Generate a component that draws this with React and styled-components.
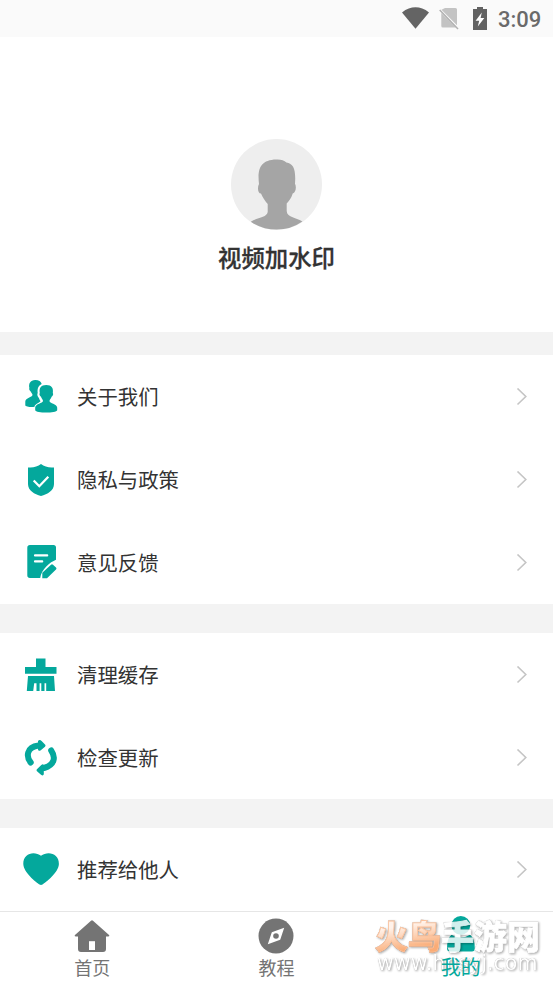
import React from "react";
import styled, { createGlobalStyle } from "styled-components";

const TEAL = "#04a89c";

const GlobalStyle = createGlobalStyle`
  * {
    box-sizing: border-box;
  }

  body {
    margin: 0;
    background: #fff;
    color: #333;
    font-family: Roboto, "Noto Sans CJK SC", sans-serif;
    overflow: hidden;
  }
`;

const icons = {
  about: (
    <g transform="translate(0 5)">
      <path d="M35.5 20C30.5 19.8 28.3 23.6 29.4 28C28.8 28.8 29.5 30.5 30.5 31.3C31.2 32.8 32.5 33.8 32.5 35C32.3 37.2 25.5 38 25.3 41.5V45.3C25.5 47 32 47.4 34.5 46.8C34.8 43.7 39.5 42.8 40.5 41.2C39.6 40 39.3 38.7 38.7 37.7C37.3 36.2 37 34.3 37.7 33C37.2 28.5 38.2 26 41.7 24C41 21.3 38.8 20 35.5 20Z" />
      <path d="M46.3 25C40.8 25 38.9 28.2 39.8 33C38.9 34 39.8 36 41 36.7C41.5 38.5 43 39.8 43 41C42.8 43.5 35.5 43.5 35.2 47.5V50.2C36 53.3 56.3 53.3 57.2 50.2V47.5C56.8 43.5 49.7 43.7 49.5 41C49.5 39.8 51.1 38.5 51.6 36.7C52.8 36 53.7 34 52.8 33C53.7 28.2 51.6 25 46.3 25Z" />
    </g>
  ),
  privacy: (
    <g transform="translate(0 2)">
      <path d="M41 24C37.6 26.7 33 28 28 27.4V44C28 50.5 34.5 54.3 41 56C47.5 54.3 54 50.5 54 44V27.4C49 28 44.4 26.7 41 24Z" />
      <path
        d="M33.7 40.5L39.3 46.2L48.3 36.7"
        fill="none"
        stroke="#fff"
        strokeWidth="2.3"
      />
    </g>
  ),
  feedback: (
    <g transform="translate(0 -6)">
      <path d="M30 30H53.5Q56 30 56 32.5V44.7C50 47.2 41.5 53.8 40.2 63H30Q27.3 63 27.3 60.3V32.7Q27.3 30 30 30Z" />
      <path
        d="M35 40.4H47.2M35 46.4H42.2"
        fill="none"
        stroke="#fff"
        strokeWidth="2.2"
        strokeLinecap="round"
      />
      <path d="M42.3 63.3V57.8L51 49.7Q52 48.8 53 49.7L56 52.5Q57 53.4 56 54.5L47 63.3Z" />
    </g>
  ),
  clean: (
    <>
      <path d="M36 25.5H45.5V34H56.5V40.7H25V34H36Z" />
      <path d="M28 43H54L55 58H46.2V50.3H44.5V58H41.3V50.3H39.6V58H36.5V50.3H34.2L33.2 58H26.8Z" />
    </>
  ),
  update: (
    <>
      <path
        d="M30.7 46.5C26.2 41 26 31 38.5 29.4M51.2 34.5C56 41.5 54.6 49 44 52"
        fill="none"
        stroke={TEAL}
        strokeWidth="6"
        strokeLinecap="round"
      />
      <path d="M38 25Q39.7 23 41.6 25L45 28.4Q46 29.6 45 30.7L40.8 34.2Q38.4 35.5 38 33.5ZM43.8 49V58.3Q43.2 60.3 41 58.8L37 55.2Q36 54 37.2 52.9L41.3 49Q43 47.5 43.8 49Z" />
    </>
  ),
  share: (
    <path d="M41 27.8C34.5 22.5 23 25 23.3 36C23.5 44.5 36 54 39.5 56.6Q41 57.5 42.5 56.6C46 54 58.7 44.5 58.9 36C59.2 25 47.5 22.5 41 27.8Z" />
  ),
};

const groups = [
  [
    { icon: "about", label: "关于我们" },
    { icon: "privacy", label: "隐私与政策" },
    { icon: "feedback", label: "意见反馈" },
  ],
  [
    { icon: "clean", label: "清理缓存" },
    { icon: "update", label: "检查更新" },
  ],
  [{ icon: "share", label: "推荐给他人" }],
];

const StatusIcons = () => (
  <StatusSvg viewBox="400 0 92 37">
    <path d="M402 12.4Q415.5 2.3 429 12.4L415.5 28.8Z" fill="#646464" />
    <path
      d="M445 8H455.5Q457 8 457 9.5V25.2L441.5 9.8ZM441.3 13L456 27.5H442.8Q441.3 27.5 441.3 26Z"
      fill="#c3c3c3"
    />
    <path d="M439.7 10L458 29" stroke="#b1b1b1" strokeWidth="1.5" />
    <path d="M477 7H483V9H487V30H473V9H477Z" fill="#626262" />
    <path d="M481.8 12.5L475.6 20.7H479.2L477.8 26.5L484.3 18H480.6Z" fill="#fff" />
  </StatusSvg>
);

const Avatar = () => (
  <AvatarSvg viewBox="0 0 91 91">
    <circle cx="45.5" cy="45.5" r="45.5" fill="#eee" />
    <path
      d="M45.5 20.5C50 20.3 53.2 21.6 55.4 23.4C62.7 24.5 65 30.5 64 44.7C65.7 48 64.8 53.5 61.7 54.6C60.5 59 57.5 62.6 55.7 64.6V72C56 78.5 64.5 78 71.4 82.5A45.5 45.5 0 0 1 19.8 82.7C26.5 78.5 36 78.5 36.7 73V65C34.2 62 31.4 58.4 30 54.5C26.8 54.5 26.2 48.3 28 45C26.4 31 28.5 20.8 45.5 20.5Z"
      fill="#a5a5a5"
    />
  </AvatarSvg>
);

const Row = ({ icon, label }) => (
  <RowButton>
    <RowIcon viewBox="20 0 44 83">{icons[icon]}</RowIcon>
    <RowLabel>{label}</RowLabel>
    <Chevron viewBox="0 0 12 18">
      <path d="M1.5 .5L9.8 8.5L1.5 16.5" />
    </Chevron>
  </RowButton>
);

const HomeIcon = () => (
  <NavSvg viewBox="0 0 36 38">
    <path d="M17 2.7Q18 1.8 19 2.7L35.3 17.2Q35.6 18.5 34 18.5H32V31Q32 34 29 34H7Q4 34 4 31V18.5H2Q.4 18.5.7 17.2Z" />
    <path d="M15 23.2H21V32H15Z" fill="#fff" />
  </NavSvg>
);

const CompassIcon = () => (
  <NavSvg viewBox="0 0 36 38">
    <circle cx="18" cy="18" r="17.5" />
    <path d="M26.2 9.8L22.2 21.7L9.8 26.2L13.8 14.2Z" fill="#fff" />
    <circle cx="18" cy="18" r="2.8" />
  </NavSvg>
);

const MineIcon = () => (
  <NavSvg viewBox="0 0 36 38">
    <circle cx="17.8" cy="7.4" r="9.4" />
    <path d="M8.5 16.7Q17.8 22.5 27 16.7Q31.8 20 31.8 30.5Q31.8 33.5 29 33.5H7Q4 33.5 4 30.5Q4 20 8.5 16.7Z" />
  </NavSvg>
);

const App = () => {
  return (
    <Screen>
      <GlobalStyle />
      <StatusBar>
        <StatusIcons />
        <Clock>3:09</Clock>
      </StatusBar>
      <Profile>
        <Avatar />
        <Name>视频加水印</Name>
      </Profile>
      <Menu>
        {groups.map((rows) => (
          <Group key={rows[0].icon}>
            {rows.map((row) => (
              <Row key={row.icon} {...row} />
            ))}
          </Group>
        ))}
      </Menu>
      <Nav>
        <NavItem>
          <HomeIcon />
          <NavLabel>首页</NavLabel>
        </NavItem>
        <NavItem>
          <CompassIcon />
          <NavLabel>教程</NavLabel>
        </NavItem>
        <NavItem $active>
          <MineIcon />
          <NavLabel>我的</NavLabel>
        </NavItem>
        <Watermark>
          <Brand>
            <Warm>火鸟</Warm>手游网
          </Brand>
          <Site>www.hnsyj.com</Site>
        </Watermark>
      </Nav>
    </Screen>
  );
};

const Screen = styled.div`
  display: flex;
  flex-direction: column;
  width: 553px;
  height: 983px;
  background: #fff;
`;

const StatusBar = styled.header`
  display: flex;
  flex: none;
  justify-content: flex-end;
  height: 37px;
  padding-right: 13px;
  background: #fafafa;
`;

const StatusSvg = styled.svg`
  width: 92px;
  height: 37px;
`;

const Clock = styled.span`
  width: 48px;
  padding-left: 6px;
  color: #6a6a6a;
  font-size: 22px;
  font-weight: 500;
  line-height: 39px;
`;

const Profile = styled.section`
  display: flex;
  flex: none;
  flex-direction: column;
  align-items: center;
  height: 295px;
  padding-top: 102px;
`;

const AvatarSvg = styled.svg`
  width: 91px;
  height: 91px;
`;

const Name = styled.h1`
  margin: 11px 0 0;
  font-size: 23.4px;
  font-weight: 500;
  line-height: 36px;
  -webkit-text-stroke: 0.3px #333;
`;

const Menu = styled.main`
  display: flex;
  flex: none;
  flex-direction: column;
  gap: 29px;
  padding-top: 23px;
  background: #f3f3f3;
`;

const Group = styled.section`
  background: #fff;
`;

const RowButton = styled.button`
  display: flex;
  align-items: center;
  width: 100%;
  height: 83px;
  padding: 0 25px 0 20px;
  border: 0;
  background: none;
  color: #333;
  font: inherit;
`;

const RowIcon = styled.svg`
  width: 44px;
  height: 83px;
  fill: ${TEAL};
`;

const RowLabel = styled.span`
  flex: 1;
  padding: 2px 0 0 13px;
  font-size: 20.4px;
  line-height: 30px;
  text-align: left;
`;

const Chevron = styled.svg`
  width: 12px;
  height: 18px;
  fill: none;
  stroke: #c5c5c5;
  stroke-width: 1.6;
`;

const Nav = styled.nav`
  position: relative;
  display: grid;
  flex: none;
  grid-template-columns: repeat(3, 1fr);
  height: 72px;
  border-top: 1px solid #e6e6e6;
  background: #fff;
`;

const NavItem = styled.a`
  display: flex;
  flex-direction: column;
  align-items: center;
  padding-top: 6px;
  color: ${(props) => (props.$active ? TEAL : "#747474")};
  fill: currentColor;
  font-size: ${(props) => (props.$active ? "20px" : "18px")};
  line-height: 25px;
`;

const NavSvg = styled.svg`
  width: 36px;
  height: 38px;
  overflow: visible;
`;

const NavLabel = styled.span`
  position: relative;
  z-index: 2;
`;

// translucent stamp that lies between the last tab's icon and its label
const Watermark = styled.div`
  position: absolute;
  z-index: 1;
  top: 7px;
  right: 13px;
  width: 165px;
  color: #fff;
  opacity: 0.82;
  filter: drop-shadow(0 0 0.6px rgba(0, 0, 0, 0.4))
    drop-shadow(1px 1px 0.8px rgba(0, 0, 0, 0.4));
  white-space: nowrap;
  pointer-events: none;
`;

const Brand = styled.div`
  font-size: 33px;
  font-weight: 900;
  line-height: 38px;
  -webkit-text-stroke: 0.8px #fff;
`;

const Warm = styled.span`
  background: linear-gradient(170deg, #fff0e6 25%, #fa9a58 75%);
  background-clip: text;
  color: transparent;
  -webkit-text-stroke: 0.8px #fbb486;
`;

const Site = styled.div`
  margin-top: -6px;
  padding-left: 2px;
  font-family: "DejaVu Sans", sans-serif;
  font-size: 20.6px;
  line-height: 24px;
`;

export default App;
